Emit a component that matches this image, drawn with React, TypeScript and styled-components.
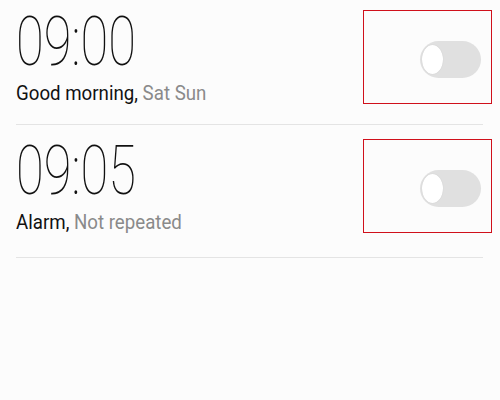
import styled, { createGlobalStyle } from 'styled-components';

type Alarm = {
  time: string;
  label: string;
  repeat: string;
};

const alarms: Alarm[] = [
  { time: '09:00', label: 'Good morning,', repeat: 'Sat Sun' },
  { time: '09:05', label: 'Alarm,', repeat: 'Not repeated' },
];

const App = () => {
  return (
    <>
      <GlobalStyle />
      <Page>
        {alarms.map((alarm, index) => (
          <div key={index}>
            <Row $first={index === 0}>
              <Info>
                <Time>{alarm.time}</Time>
                <Subtitle>
                  <Label>{alarm.label}</Label> <Repeat>{alarm.repeat}</Repeat>
                </Subtitle>
              </Info>
              <SwitchBox>
                <Track>
                  <Knob />
                </Track>
              </SwitchBox>
            </Row>
            <Divider />
          </div>
        ))}
      </Page>
    </>
  );
};

const GlobalStyle = createGlobalStyle`
  html, body {
    margin: 0;
    padding: 0;
    background: #fcfcfc;
    font-family: Roboto, "Noto Sans", sans-serif;
  }
`;

const Page = styled.div`
  width: 500px;
  height: 400px;
  background: #fcfcfc;
  overflow: hidden;
`;

const Row = styled.div<{ $first: boolean }>`
  display: flex;
  justify-content: space-between;
  align-items: flex-start;
  padding: ${(p) => (p.$first ? '10px 8px 17px 16px' : '14px 8px 21px 16px')};
`;

const Info = styled.div`
  display: flex;
  flex-direction: column;
  gap: 4px;
`;

const Time = styled.div`
  font-family: Roboto, sans-serif;
  font-weight: 100;
  font-size: 68px;
  line-height: 65px;
  color: #111;
  transform: scaleX(0.745);
  transform-origin: left center;
  white-space: nowrap;
`;

const Subtitle = styled.div`
  font-size: 21px;
  line-height: 28px;
  white-space: nowrap;
  transform: scaleX(0.89);
  transform-origin: left center;
`;

const Label = styled.span`
  color: #111;
`;

const Repeat = styled.span`
  color: #8a8a8a;
`;

const SwitchBox = styled.div`
  box-sizing: border-box;
  width: 129px;
  height: 94px;
  border: 1px solid #d0101b;
  display: flex;
  align-items: center;
  justify-content: flex-end;
  padding: 4px 10px 0 0;
`;

const Track = styled.div`
  width: 61px;
  height: 37px;
  border-radius: 19px;
  background: #e0e0e0;
  display: flex;
  align-items: center;
  padding-left: 2px;
  box-sizing: border-box;
`;

const Knob = styled.div`
  width: 21px;
  height: 29px;
  border-radius: 50%;
  background: #ffffff;
  box-shadow: 0 0 1px rgba(0, 0, 0, 0.15);
`;

const Divider = styled.div`
  height: 1px;
  background: #e4e4e4;
  margin: 0 17px 0 16px;
`;

export default App;
